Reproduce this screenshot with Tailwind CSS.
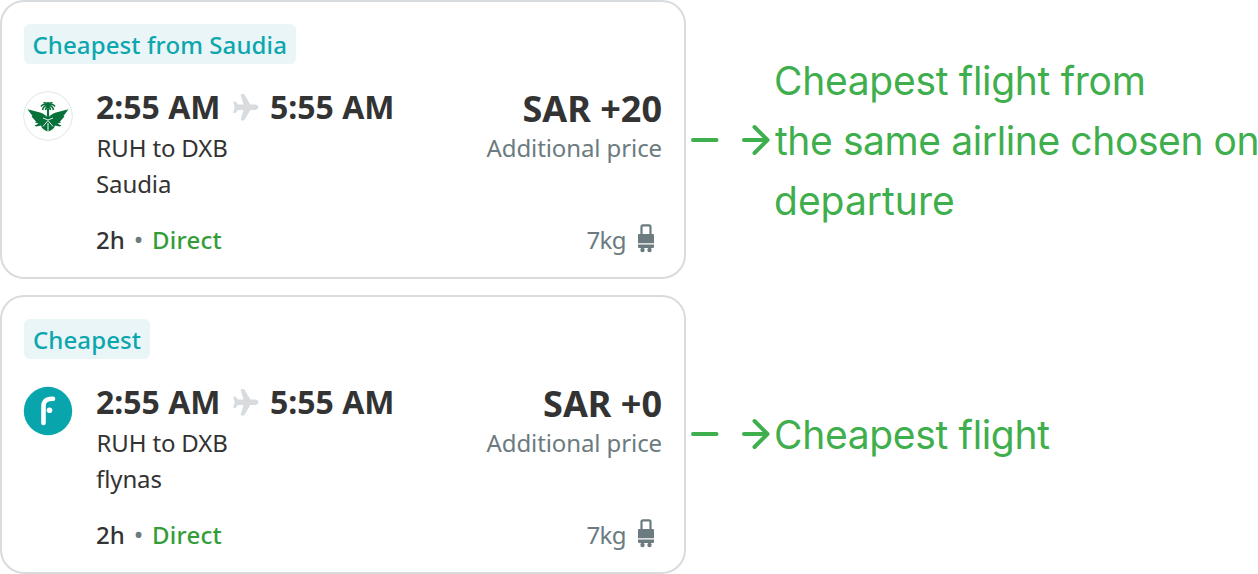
<!DOCTYPE html>
<html lang="en">
<head>
<meta charset="utf-8">
<title>Flight options</title>
<script src="https://cdn.jsdelivr.net/npm/@tailwindcss/browser@4"></script>
</head>
<body class="bg-white w-[1258px] h-[574px] overflow-hidden font-['Noto_Sans',sans-serif] text-[#333333]">
<svg class="hidden">
  <symbol id="plane" viewBox="0 0 26 28"><path d="M7.800 1.200Q7.500 0 8.700 0h1.600q1 0 1.500.9L17.300 10.500H22.500q3 .9 3 2.700t-3 2.700h-5.200L11.800 25.500q-.5.900-1.500.9H8.700q-1.200 0-.9-1.200L10.500 16H5l-2 2.500q-.4.500-1 .5H1Q.1 19 .3 18.100L1.700 13.200.3 8.300Q.1 7.400 1 7.400H2q.6 0 1 .5l2 2.600h5.500z"/></symbol>
  <symbol id="bag" viewBox="0 0 18 29"><path d="M4.500 11V2.700Q4.500 1.300 5.900 1.300h6.200q1.400 0 1.400 1.400V11" fill="none" stroke="currentColor" stroke-width="2.200"/><path d="M2 10h14q1 0 1 1v8.300H1V11q0-1 1-1zM1 20.500H17v2.300q0 1.200-1.200 1.200H2.200Q1 24 1 22.800z"/><circle cx="5.500" cy="26" r="2.200"/><circle cx="12.500" cy="26" r="2.200"/></symbol>
  <symbol id="arrow" viewBox="0 0 80 34"><path d="M2 17H25.500M53 17H76.500M63.500 4 76.500 17 63.500 30" fill="none" stroke="currentColor" stroke-width="4" stroke-linecap="round" stroke-linejoin="round"/></symbol>
</svg>
<main class="flex">
  <div class="flex flex-col gap-4 w-[686px] shrink-0">
    <section class="h-[279px] border-2 border-[#d8dcdf] rounded-[24px] p-[22px]">
      <div class="flex h-10 items-center rounded-[6px] bg-[#eaf5f8] pl-[8.500px] w-[272px] text-[24px] leading-10 tracking-[0.1px] font-medium text-[#0ca7ae] whitespace-nowrap"><span class="mt-[2px]">Cheapest from Saudia</span></div>
      <div class="flex mt-[21px]">
        <svg class="w-[50px] h-[50px] -ml-px mt-[6px] shrink-0" viewBox="0 0 50 50">
          <circle cx="25" cy="25" r="24.300" fill="#fff" stroke="#dfe6e6"/>
          <g fill="#08713a">
            <path id="wing" d="M4.500 18.200 17 21.500Q23 23.500 24.600 27L24.600 31 20 34.500 17 34.800 13 35.500 11.500 34.700 15.500 32.500 12 31.500 13 30.500 8.500 25.500 9.500 25z"/>
            <use href="#wing" transform="translate(50 0) scale(-1 1)"/>
            <path d="M24.500 31V40.500Q18.500 38 18 34.500zM25.500 31V40.500Q31.500 38 32 34.500z"/>
            <path d="M24 18h2l.3 14h-2.600z"/>
          </g>
          <path d="M25 29.500 20 35.500M25 29.500 30 35.500M25 29l-5-2M25 29l5-2" stroke="#fff" stroke-width=".9"/>
          <path d="M25 20v-7M25 14.500Q20.500 14 19.500 19M25 14q-5-2-7 1.500M25 13.500q-2-2.500-4.500-1.500M25 14V11M25 13.500q2-2.500 4.500-1.500M25 14q5-2 7 1.500M25 14.500q4.500-.5 5.500 4.500M25 15.500q-2 .5-2.500 3.500M25 15.500q2 .5 2.500 3.500" fill="none" stroke="#08713a" stroke-width="1.600"/>
        </svg>
        <div class="ml-[23px] leading-9 text-[24px]">
          <div class="flex items-center h-[45px] pb-[2px] text-[32px] font-bold whitespace-nowrap"><span class="w-[137px]">2:55 AM</span><svg class="w-[26px] h-[28px] mt-[2px] fill-[#d8dcdf]"><use href="#plane"/></svg><span class="ml-[11px]">5:55 AM</span></div>
          <div class="tracking-[-0.150px] pl-[0.500px]">RUH to DXB</div>
          <div class="tracking-[-0.1px]">Saudia</div>
          <div class="flex mt-5 font-medium"><span class="w-[39px]">2h</span><span class="w-[17px] -ml-px mr-px text-[#6b7b80]">•</span><span class="text-[#339d3a] tracking-[0.250px]">Direct</span></div>
        </div>
        <div class="ml-auto flex flex-col items-end text-[24px] leading-9 text-[#6b7b80]">
          <div class="h-[45px] text-[36px] leading-[47px] font-bold text-[#333333]">SAR +20</div>
          <div class="tracking-[-0.1px]">Additional price</div>
          <div class="mt-14 flex"><span class="tracking-[-0.600px]">7kg</span><svg class="w-[18px] h-[29px] ml-[11px] mr-[7px] mt-[2px] fill-current"><use href="#bag"/></svg></div>
        </div>
      </div>
    </section>
    <section class="h-[279px] border-2 border-[#d8dcdf] rounded-[24px] p-[22px]">
      <div class="flex h-10 items-center rounded-[6px] bg-[#eaf5f8] pl-[9px] w-[126px] text-[24px] leading-10 tracking-[0.1px] font-medium text-[#0ca7ae] whitespace-nowrap"><span class="mt-[2px]">Cheapest</span></div>
      <div class="flex mt-[21px]">
        <svg class="w-[50px] h-[50px] -ml-px mt-[6px] shrink-0" viewBox="0 0 50 50">
          <circle cx="25" cy="25" r="24.200" fill="#08a6ac"/>
          <path d="M20.500 37V20.500Q20.500 13.700 26.500 13L30 12.800" fill="none" stroke="#fff" stroke-width="4.600" stroke-linecap="round"/>
          <circle cx="26.500" cy="24.200" r="2.800" fill="#fff"/>
        </svg>
        <div class="ml-[23px] leading-9 text-[24px]">
          <div class="flex items-center h-[45px] pb-[2px] text-[32px] font-bold whitespace-nowrap"><span class="w-[137px]">2:55 AM</span><svg class="w-[26px] h-[28px] mt-[2px] fill-[#d8dcdf]"><use href="#plane"/></svg><span class="ml-[11px]">5:55 AM</span></div>
          <div class="tracking-[-0.150px] pl-[0.500px]">RUH to DXB</div>
          <div class="tracking-[-0.1px]">flynas</div>
          <div class="flex mt-5 font-medium"><span class="w-[39px]">2h</span><span class="w-[17px] -ml-px mr-px text-[#6b7b80]">•</span><span class="text-[#339d3a] tracking-[0.250px]">Direct</span></div>
        </div>
        <div class="ml-auto flex flex-col items-end text-[24px] leading-9 text-[#6b7b80]">
          <div class="h-[45px] text-[36px] leading-[47px] font-bold text-[#333333]">SAR +0</div>
          <div class="tracking-[-0.1px]">Additional price</div>
          <div class="mt-14 flex"><span class="tracking-[-0.600px]">7kg</span><svg class="w-[18px] h-[29px] ml-[11px] mr-[7px] mt-[2px] fill-current"><use href="#bag"/></svg></div>
        </div>
      </div>
    </section>
  </div>
  <div class="ml-[5px] text-[#3fae4d] font-['Inter',sans-serif] text-[39px] leading-[60px] whitespace-nowrap">
    <div class="flex items-center h-[279px]"><svg class="w-20 h-[34px] mr-[3px] mt-px shrink-0"><use href="#arrow"/></svg><div class="mt-[2px]"><div class="tracking-[-0.300px]">Cheapest flight from</div><div class="tracking-[-0.400px] pl-px">the same airline chosen on</div><div>departure</div></div></div>
    <div class="flex items-center h-[279px] mt-4"><svg class="w-20 h-[34px] mr-[3px] -mt-px shrink-0"><use href="#arrow"/></svg><div class="tracking-[-0.330px]">Cheapest flight</div></div>
  </div>
</main>
</body>
</html>
